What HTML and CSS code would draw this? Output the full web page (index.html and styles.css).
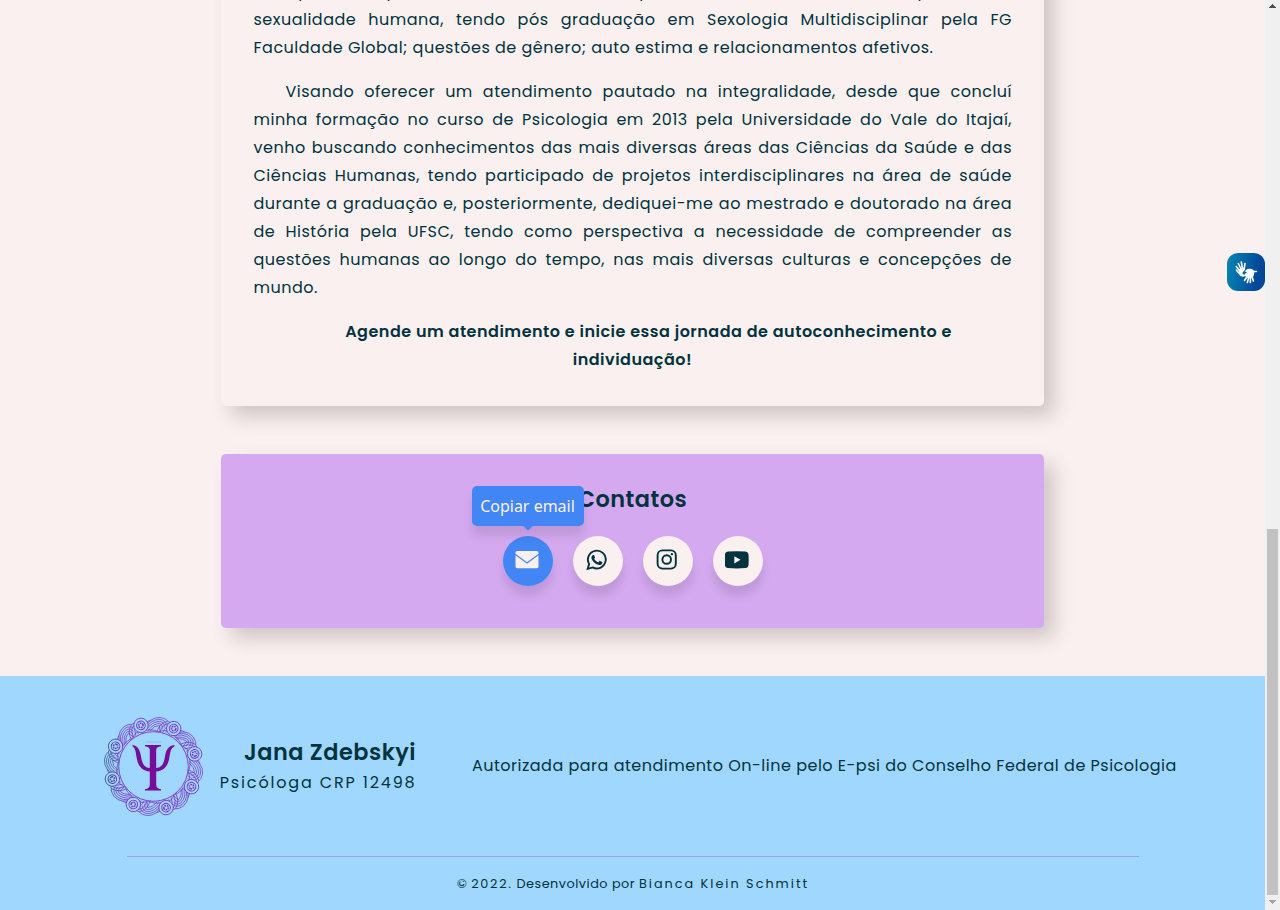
FILE: index.html
```html
<!DOCTYPE html>
<html lang="pt-BR">
<head>
<meta charset="utf-8">
<title>Jana Zdebskyi</title>
<link rel="stylesheet" href="styles.css">
</head>
<body>
<div class="viewport">
<div class="page">
  <main>
    <section class="card about">
      <p class="prose">
        <span class="line">Atuo pela área poética com foco nos temas para as demandas e relatos da pessoa em</span>
        <span class="line">sexualidade humana, tendo pós graduação em Sexologia Multidisciplinar pela FG</span>
        <span class="line end">Faculdade Global; questões de gênero; auto estima e relacionamentos afetivos.</span>
      </p>
      <p class="prose">
        <span class="line indent">Visando oferecer um atendimento pautado na integralidade, desde que concluí</span>
        <span class="line">minha formação no curso de Psicologia em 2013 pela Universidade do Vale do Itajaí,</span>
        <span class="line">venho buscando conhecimentos das mais diversas áreas das Ciências da Saúde e das</span>
        <span class="line">Ciências Humanas, tendo participado de projetos interdisciplinares na área de saúde</span>
        <span class="line">durante a graduação e, posteriormente, dediquei-me ao mestrado e doutorado na área</span>
        <span class="line">de História pela UFSC, tendo como perspectiva a necessidade de compreender as</span>
        <span class="line">questões humanas ao longo do tempo, nas mais diversas culturas e concepções de</span>
        <span class="line end">mundo.</span>
      </p>
      <p class="call"><span class="call-first">Agende um atendimento e inicie essa jornada de autoconhecimento e</span><br>individuação!</p>
    </section>
    <section class="card contacts">
      <h2>Contatos</h2>
      <div class="icons">
        <a class="icon active"><span class="tip">Copiar email</span>
          <svg width="24" height="24" viewBox="0 0 24 24"><path fill="currentColor" d="M2.200 3h19.600q1.700 0 1.700 1.700v1L12 14.200.5 5.700v-1Q.5 3 2.200 3zM.5 7.200 12 15.800 23.500 7.200v11.300q0 1.700-1.700 1.700H2.200Q.5 20.200.5 18.500z"/></svg></a>
        <a class="icon"><svg width="24" height="24" viewBox="0 0 24 24"><path fill="none" stroke="currentColor" stroke-width="1.900" d="M2.700 20.800 4.100 16A8.900 8.900 0 1 1 7.600 19.400z"/><path fill="currentColor" d="M8.500 6.900c.4 0 .5.100.7.500l.8 1.900c.1.300 0 .5-.8 1.400 1 1.900 2.200 2.900 4.100 3.700l1.100-1.300c.2-.3.400-.3.700-.2l2 1c.3.200.4.300.3.800-.3 1.600-1.500 2.300-2.800 2.300-3.700-.5-6.900-3.300-8.100-6.600-.3-1.600.5-3.500 2-3.500z"/></svg></a>
        <a class="icon"><svg width="24" height="24" viewBox="0 0 24 24" fill="none" stroke="currentColor" stroke-width="1.900"><rect x="2.600" y="2.400" width="18.200" height="18.200" rx="4.800"/><circle cx="11.700" cy="11.500" r="4.300"/><circle cx="16.900" cy="6.200" r="1.150" fill="currentColor" stroke="none"/></svg></a>
        <a class="icon"><svg width="24" height="24" viewBox="0 0 24 24"><path fill="currentColor" fill-rule="evenodd" d="M3 3.400Q11.700 2.900 20.400 3.400q2.600.2 3 2.500.6 5.900 0 11.800-.4 2.200-3 2.400-8.700.7-17.400 0Q.4 19.900 0 17.700q-.6-5.900 0-11.800.4-2.300 3-2.500zM9.300 8.300v7.100l6.300-3.550z"/></svg></a>
      </div>
    </section>
  </main>
  <footer>
    <div class="foot-row">
      <svg class="logo" width="100" height="100" viewBox="-50 -50 100 100">
        <defs>
          <linearGradient id="ink" gradientUnits="userSpaceOnUse" x1="-49" y1="2" x2="-32" y2="2"><stop offset="0" stop-color="#25507d"/><stop offset="1" stop-color="#7a2fbd"/></linearGradient>
          <g id="braid" fill="none" stroke="#fff" stroke-width=".7">
            <path d="M-13-35Q-9-49 2-49.500 8-49 10-46.500 18-44 18-36M-12-35Q-8-47 2-47.500 8-47 9-42M-11-35Q-6-45 2-45.500 7-45 7-40M-9-35Q-4-43 2-43.500 5-43 5-38M-7-35Q-3-41 2-41.500L3-36M10-46.500Q2-44 0-35M11-44.500Q5-43 3-35M13-43Q8-41 6-35M15-41Q10-40 9-35M17-39Q13-38 12-35M-15-36Q-14-43-7-46M-17-36Q-16-41-12-43M-14-34Q-6-38 2-35 9-39 17-35"/>
          </g>
          <g id="bead" fill="none" stroke="#fff" stroke-width=".8">
            <circle cy="-43" r="7.200" fill="#000"/><circle cy="-43" r="4.300" stroke-width="1"/><circle cy="-43" r="2.200" stroke-width="1.500" stroke-dasharray="1.500 .7"/>
          </g>
          <g id="braids"><use href="#braid"/><use href="#braid" transform="rotate(90)"/><use href="#braid" transform="rotate(180)"/><use href="#braid" transform="rotate(270)"/></g>
          <g id="beads"><use href="#bead"/><use href="#bead" transform="rotate(90)"/><use href="#bead" transform="rotate(180)"/><use href="#bead" transform="rotate(270)"/></g>
          <mask id="ring" maskUnits="userSpaceOnUse" x="-51" y="-51" width="102" height="102"><use href="#braids" transform="rotate(5.500)"/><use href="#braids" transform="rotate(50.500)"/><use href="#beads" transform="rotate(-17)"/><use href="#beads" transform="rotate(28)"/><circle r="34.800" stroke="#fff" stroke-width=".9"/></mask>
        </defs>
        <g transform="translate(-.5 -.5)">
        <rect x="-51" y="-51" width="102" height="102" fill="url(#ink)" mask="url(#ring)"/>
        <path stroke="#8a9ce4" stroke-width=".6" d="M-7-24.500H8"/>
        <path fill="#750d9b" d="M-8.500-21.500H7.500v1.300Q2.700-19.500 2.700-16.500V1.500C9 1 10.500-4 11.500-10S14.500-21 21-21.500v1.300C16.500-18 16.800-13 15.500-7 14 0 10 4.500 2.700 5V18.500Q2.700 22 7.500 22.700V24H-8.500V22.700Q-3.700 22-3.700 18.500V5C-11 4.500-15 0-16.500-7-17.800-13-17.500-18-21-20.200V-21.500C-15.500-21-13.500-16-12.500-10S-10 1-3.700 1.500V-16.500Q-3.700-19.500-8.500-20.200z"/>
        </g>
      </svg>
      <div class="brand"><strong>Jana Zdebskyi</strong><span>Psicóloga CRP 12498</span></div>
      <p class="auth">Autorizada para atendimento On-line pelo E-psi do Conselho Federal de Psicologia</p>
    </div>
    <div class="copy">© <span class="wide">2022.</span> Desenvolvido por <span class="wide">Bianca Klein Schmitt</span></div>
  </footer>
</div>
<div class="scroll"><svg width="15" height="15" shape-rendering="crispEdges"><path fill="#505050" d="M4 8h7L7.500 4z"/></svg><div class="thumb"></div><svg width="15" height="15" shape-rendering="crispEdges"><path fill="#a3a3a3" d="M4 5h7L7.500 9z"/></svg></div>
<div class="libras"><svg width="38" height="38" viewBox="0 0 38 38" fill="none" stroke="#fff" stroke-linecap="round"><path stroke-width="1.600" d="M12.500 17.500 9.300 13.500M14 16 11.300 10.500M15.500 15.500 14.300 9M17 16.500 18 10.500M12 20Q10.500 19 9.500 17M20.500 23 17.500 27.500M22 23.500 20.300 29.500M23.500 23.500 23.300 29.500M25 23 26.300 28M25.500 18.500 29.500 18.500"/><path fill="#fff" stroke="none" d="M12 16.500 17.500 15q1 2-1 3.500-2 1.500 0 3l2 1-1.500 1.200q-5-.2-5.300-4z"/><path fill="#fff" stroke="none" d="M18 18.500q1-3 5-2.700 4 .2 4.300 3.200.2 3-1.500 5-3 1.500-5.800.5-2.500-1-2.500-3.500l2.500-1.500z"/></svg></div>
</div>
</body>
</html>
```
FILE: styles.css
```css
* { box-sizing: border-box; }
body { margin: 0; background: #faf0ef; color: #00333d; font-family: Poppins, Inter, "Open Sans", sans-serif; font-size: 16px; letter-spacing: .5px; }
.viewport { display: flex; position: relative; height: 910px; overflow: hidden; }
.page { width: 1265px; height: 910px; display: flex; flex-direction: column; }
main { height: 676px; flex: none; display: flex; flex-direction: column; justify-content: flex-end; align-items: center; gap: 48px; padding-bottom: 48px; }
.card { width: 823px; flex: none; border-radius: 5px; background: #faf0ef; box-shadow: 10px 10px 20px rgba(0, 0, 0, .18); }
.about { padding: 32px; }
p { margin: 0; }
.prose { line-height: 28px; margin-bottom: 16px; padding-left: .5px; }
.line { display: block; white-space: nowrap; text-align-last: justify; }
.line.end { text-align-last: left; }
.indent { padding-left: 32px; }
.call { font-weight: 600; line-height: 28px; text-align: center; }
.call-first { padding-left: 32px; }
.card.contacts { background: #d4a9f0; box-shadow: 10px 10px 20px rgba(0, 0, 0, .18); height: 174px; padding-top: 27px; display: flex; flex-direction: column; align-items: center; }
h2 { margin: 0; font-size: 22.4px; line-height: 36px; font-weight: 600; }
.icons { display: flex; gap: 20px; margin-top: 19px; }
.icon { position: relative; width: 50px; height: 50px; border-radius: 50%; background: #faf0ef; box-shadow: 0 10px 10px rgba(0, 0, 0, .1); display: flex; justify-content: center; padding-top: 12px; padding-right: 2px; }
.icon.active { background: #4285f4; color: #faf0ef; }
.tip { position: absolute; left: -31px; top: -50px; width: 112px; height: 40px; border-radius: 5px; background: #4285f4; box-shadow: 0 10px 10px rgba(0, 0, 0, .1); font: 16px/40px "Noto Sans", sans-serif; letter-spacing: 0; text-align: center; white-space: nowrap; }
.tip::after { content: ""; position: absolute; width: 8px; height: 8px; left: 52px; bottom: -3px; background: #4285f4; transform: rotate(45deg); }
footer { flex: none; height: 234px; background: #a0d7ff; padding: 41px 0 0 104px; }
.foot-row { display: flex; height: 139px; align-items: flex-start; }
.logo { flex: none; }
.brand { width: 196px; margin-left: 16px; padding-top: 17px; display: flex; flex-direction: column; align-items: flex-end; white-space: nowrap; }
.brand strong { font-size: 22.4px; line-height: 36px; font-weight: 600; }
.brand span { line-height: 26px; letter-spacing: 1.84px; margin-right: -.5px; }
.auth { margin: 36px 0 0 56px; line-height: 26px; white-space: nowrap; }
.copy { width: 1012px; margin-left: 23px; border-top: 1px solid #9d9eea; text-align: center; font-size: 12.8px; line-height: 20px; padding-top: 17px; white-space: pre; }
.wide { letter-spacing: 2px; }
.wide:first-child { letter-spacing: 1.7px; }
.scroll { width: 15px; height: 910px; background: #f0f0f0; display: flex; flex-direction: column; }
.scroll svg { display: block; flex: none; }
.thumb { width: 11px; height: 366px; margin: 514px 0 0 2px; background: #c1c1c1; }
.libras { position: absolute; left: 1227px; top: 253px; width: 38px; height: 38px; border-radius: 11px; background: linear-gradient(100deg, #0788b3, #004798 80%); }
.libras svg { display: block; }
```
